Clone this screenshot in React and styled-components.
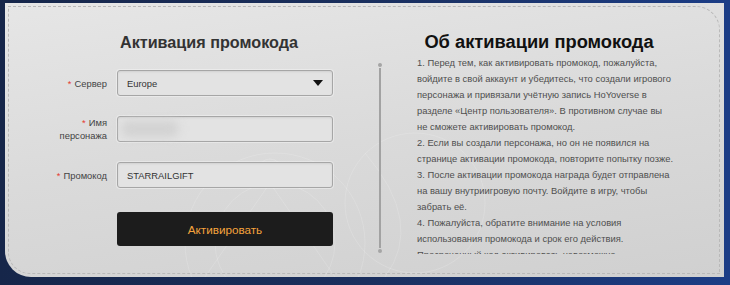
import React from "react";
import styled, { createGlobalStyle } from "styled-components";

const Global = createGlobalStyle`
  html, body { margin: 0; padding: 0; }
  body {
    width: 730px;
    height: 285px;
    overflow: hidden;
    background: linear-gradient(90deg, #16264a 0%, #1a2f5e 50%, #1c3d86 100%);
    font-family: "Liberation Sans", Arial, sans-serif;
  }
`;

const Page = styled.div`
  padding: 3px 6px 8px 5px;
  height: 285px;
  box-sizing: border-box;
`;

const Card = styled.div`
  position: relative;
  height: 274px;
  box-sizing: border-box;
  padding: 3px 4px 3px 3px;
  border-radius: 0 0 0 26px;
  background: linear-gradient(172deg, #e6e6e6 0%, #dadada 50%, #d0d0d0 100%);
  overflow: hidden;
`;

const Deco = styled.svg`
  position: absolute;
  left: 0;
  top: 0;
  pointer-events: none;
`;

const Frame = styled.div`
  position: relative;
  height: 100%;
  box-sizing: border-box;
  border: 1px dashed #b9b9b9;
  border-radius: 0 24px 0 22px;
  display: flex;
  align-items: flex-start;
`;

const LeftCol = styled.div`
  width: 340px;
  margin-left: 30px;
  padding-top: 24px;
  display: flex;
  flex-direction: column;
`;

const Title = styled.h2`
  margin: 0;
  font-size: ${(p) => p.$size}px;
  line-height: 22px;
  font-weight: bold;
  color: ${(p) => p.$color};
  text-align: center;
`;

const Form = styled.div`
  margin-top: 17px;
  display: flex;
  flex-direction: column;
  gap: 20px;
`;

const Row = styled.div`
  display: grid;
  grid-template-columns: 68px 216px;
  column-gap: 10px;
  align-items: center;
`;

const Label = styled.div`
  font-size: 9.4px;
  line-height: 13px;
  color: #444;
  text-align: right;
`;

const Star = styled.span`
  color: #e53a2f;
  margin-right: 3px;
`;

const Field = styled.div`
  position: relative;
  height: 26px;
  box-sizing: border-box;
  border: 1px solid #a6a6a6;
  border-radius: 3px;
  background: #e3e3e3;
  box-shadow: inset 0 1px 2px rgba(0, 0, 0, 0.08), 0 0 0 1px rgba(255, 255, 255, 0.35);
  display: flex;
  align-items: center;
  justify-content: space-between;
  padding: 0 9px;
  font-size: 9.4px;
  color: #333;
`;

const Caret = styled.span`
  width: 0;
  height: 0;
  border-left: 5px solid transparent;
  border-right: 5px solid transparent;
  border-top: 6px solid #111;
`;

const Blur = styled.span`
  width: 58px;
  height: 16px;
  margin-left: -6px;
  background: #d2d2d2;
  border-radius: 8px;
  filter: blur(5px);
`;

const Button = styled.button`
  height: 34px;
  margin-top: 4px;
  border: none;
  border-radius: 3px;
  background: #1c1c1c;
  color: #f4a33c;
  font-family: "Liberation Sans", Arial, sans-serif;
  font-size: 11.7px;
  cursor: pointer;
`;

const Divider = styled.div`
  width: 2px;
  margin-top: 56px;
  display: flex;
  flex-direction: column;
  align-items: center;
`;

const Dot = styled.span`
  width: 4px;
  height: 4px;
  border-radius: 50%;
  background: #a5a5a5;
  flex: none;
`;

const Line = styled.span`
  width: 2px;
  height: 180px;
  margin: 1px 0;
  background: #a2a2a2;
`;

const RightCol = styled.div`
  width: 316px;
  padding-top: 24px;
  display: flex;
  flex-direction: column;
`;

const Info = styled.div`
  margin-top: 2px;
  padding: 0 22px 0 36px;
  height: 199px;
  overflow: hidden;
  font-size: 9.4px;
  line-height: 16px;
  color: #4f4f4f;
`;

const Para = styled.p`
  margin: 0;
`;

const notes = [
  "1. Перед тем, как активировать промокод, пожалуйста, войдите в свой аккаунт и убедитесь, что создали игрового персонажа и привязали учётную запись HoYoverse в разделе «Центр пользователя». В противном случае вы не сможете активировать промокод.",
  "2. Если вы создали персонажа, но он не появился на странице активации промокода, повторите попытку позже.",
  "3. После активации промокода награда будет отправлена на вашу внутриигровую почту. Войдите в игру, чтобы забрать её.",
  "4. Пожалуйста, обратите внимание на условия использования промокода и срок его действия. Просроченный код активировать невозможно.",
];

export default function App() {
  return (
    <>
      <Global />
      <Page>
        <Card>
          <Deco width="719" height="274" viewBox="0 0 719 274">
            <g fill="none" stroke="#ffffff" strokeOpacity="0.16" strokeWidth="1">
              <circle cx="270" cy="240" r="90" />
              <circle cx="270" cy="240" r="60" />
              <circle cx="265" cy="168" r="12" />
              <path d="M200 274 L265 180 L330 274" />
              <circle cx="410" cy="200" r="70" />
              <path d="M360 150 Q420 220 380 274" />
            </g>
          </Deco>
          <Frame>
            <LeftCol>
              <Title $size={16.2} $color="#333">Активация промокода</Title>
              <Form>
                <Row>
                  <Label>
                    <Star>*</Star>Сервер
                  </Label>
                  <Field>
                    <span>Europe</span>
                    <Caret />
                  </Field>
                </Row>
                <Row>
                  <Label>
                    <Star>*</Star>Имя
                    <br />
                    персонажа
                  </Label>
                  <Field>
                    <Blur />
                  </Field>
                </Row>
                <Row>
                  <Label>
                    <Star>*</Star>Промокод
                  </Label>
                  <Field>
                    <span>STARRAILGIFT</span>
                  </Field>
                </Row>
                <Row>
                  <span />
                  <Button>Активировать</Button>
                </Row>
              </Form>
            </LeftCol>
            <Divider>
              <Dot />
              <Line />
              <Dot />
            </Divider>
            <RightCol>
              <Title $size={18.3} $color="#111">Об активации промокода</Title>
              <Info>
                {notes.map((n) => (
                  <Para key={n.slice(0, 8)}>{n}</Para>
                ))}
              </Info>
            </RightCol>
          </Frame>
        </Card>
      </Page>
    </>
  );
}
